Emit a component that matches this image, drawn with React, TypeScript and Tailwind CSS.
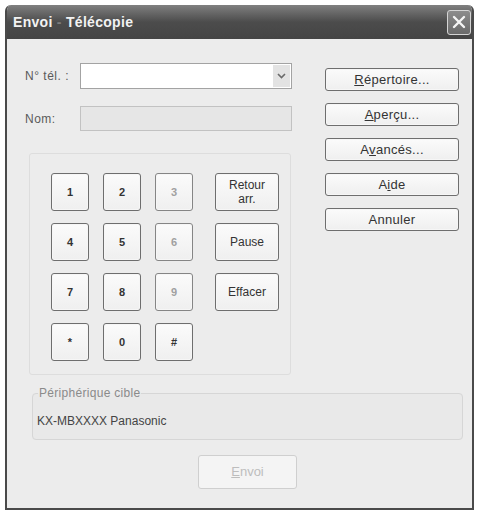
import React from "react";

const btnBase =
  "flex items-center justify-center rounded-[3px] border bg-gradient-to-b from-[#fbfbfb] to-[#efefef] shadow-[inset_0_0_0_1px_#f6f6f6]";
const btn = `${btnBase} border-[#6e6e6e] text-[#333]`;

function SideButton({ children }: { children: React.ReactNode }) {
  return <div className={`${btn} w-[134px] h-[23px] text-[13px] tracking-[0.3px]`}>{children}</div>;
}

function Key({ label, light }: { label: string; light?: boolean }) {
  return (
    <div
      className={`${btnBase} w-[38px] h-[38px] text-[11px] font-bold ${
        light ? "text-[#a0a0a0] border-[#858585]" : "text-[#333] border-[#6e6e6e]"
      }`}
    >
      {label}
    </div>
  );
}

function FnKey({ children }: { children: React.ReactNode }) {
  return (
    <div className={`${btn} w-[64px] h-[38px] justify-self-end text-[12px] leading-[14px] text-center`}>
      {children}
    </div>
  );
}

export default function App() {
  return (
    <div className="min-h-[512px] bg-white pl-[5px] pt-[5px] font-['Liberation_Sans',Arial,sans-serif]">
      <div className="w-[469px] h-[505px] flex flex-col rounded-t-[6px] overflow-hidden border-x-2 border-b-2 border-[#4a4a4a] bg-[#ececec]">
        {/* title bar */}
        <div className="h-[34px] shrink-0 flex items-center justify-between pl-[6px] pr-[1px] bg-gradient-to-b from-[#808080] via-[#4c4c4c] to-[#444444]">
          <div className="text-[14px] font-bold text-[#f2f2f2] tracking-[0.3px]">
            Envoi <span className="text-[#7c7c7c]">-</span> Télécopie
          </div>
          <div className="w-[24px] h-[25px] rounded-[3px] border border-[#d4d4d4] bg-gradient-to-b from-[#8c8c8c] to-[#6a6a6a] flex items-center justify-center">
            <svg width="14" height="14" viewBox="0 0 14 14">
              <path d="M2 2 L12 12 M12 2 L2 12" stroke="#f4f4f4" strokeWidth="2.4" strokeLinecap="round" />
            </svg>
          </div>
        </div>

        {/* body */}
        <div className="flex-1 flex flex-col pl-[18px] pt-[24px]">
          <div className="flex">
            <div className="w-[267px] flex flex-col">
              <div className="flex items-center h-[26px]">
                <span className="w-[55px] text-[12px] text-[#5a5a5a] tracking-[0.5px]">N° tél. :</span>
                <div className="w-[212px] h-[26px] bg-white border border-[#a3a3a3] flex justify-end p-[1px]">
                  <div className="w-[17px] h-full bg-[#e3e3e3] flex items-center justify-center">
                    <svg width="9" height="6" viewBox="0 0 9 6">
                      <path d="M1 1 L4.5 4.5 L8 1" fill="none" stroke="#6a6a6a" strokeWidth="1.6" />
                    </svg>
                  </div>
                </div>
              </div>
              <div className="flex items-center h-[25px] mt-[17px]">
                <span className="w-[55px] text-[12px] text-[#5a5a5a] tracking-[0.5px]">Nom:</span>
                <div className="w-[212px] h-[25px] bg-[#e6e6e6] border border-[#c2c2c2]" />
              </div>

              {/* keypad */}
              <div className="ml-[4px] mt-[22px] w-[262px] h-[222px] border border-[#dddddd] rounded-[3px] pl-[21px] pt-[19px]">
                <div className="grid grid-cols-[38px_38px_38px_72px] grid-rows-[38px_38px_38px_38px] gap-x-[14px] gap-y-[12px]">
                  <Key label="1" />
                  <Key label="2" />
                  <Key label="3" light />
                  <FnKey>
                    <span>
                      Retour
                      <br />
                      arr.
                    </span>
                  </FnKey>
                  <Key label="4" />
                  <Key label="5" />
                  <Key label="6" light />
                  <FnKey>Pause</FnKey>
                  <Key label="7" />
                  <Key label="8" />
                  <Key label="9" light />
                  <FnKey>Effacer</FnKey>
                  <Key label="*" />
                  <Key label="0" />
                  <Key label="#" />
                </div>
              </div>
            </div>

            {/* right column */}
            <div className="ml-[33px] mt-[5px] flex flex-col gap-[12px]">
              <SideButton>
                <span className="underline">R</span>épertoire...
              </SideButton>
              <SideButton>
                <span className="underline">A</span>perçu...
              </SideButton>
              <SideButton>
                A<span className="underline">v</span>ancés...
              </SideButton>
              <SideButton>
                A<span className="underline">i</span>de
              </SideButton>
              <SideButton>Annuler</SideButton>
            </div>
          </div>

          {/* target device */}
          <fieldset className="ml-[7px] mt-[9px] w-[431px] h-[56px] border border-[#d6d6d6] rounded-[4px] bg-[#e9e9e9] px-[4px]">
            <legend className="ml-[1px] px-[1px] text-[12px] text-[#8a8a8a] tracking-[0.3px]">Périphérique cible</legend>
            <div className="mt-[10px] text-[12px] text-[#444]">KX-MBXXXX Panasonic</div>
          </fieldset>

          <div className="ml-[7px] w-[431px] mt-[15px] flex justify-center">
            <div className="w-[99px] h-[34px] rounded-[3px] border border-[#cfcfcf] bg-[#f4f4f4] flex items-center justify-center text-[13px] text-[#bdbdbd]">
              <span className="underline">E</span>nvoi
            </div>
          </div>
        </div>
      </div>
    </div>
  );
}
